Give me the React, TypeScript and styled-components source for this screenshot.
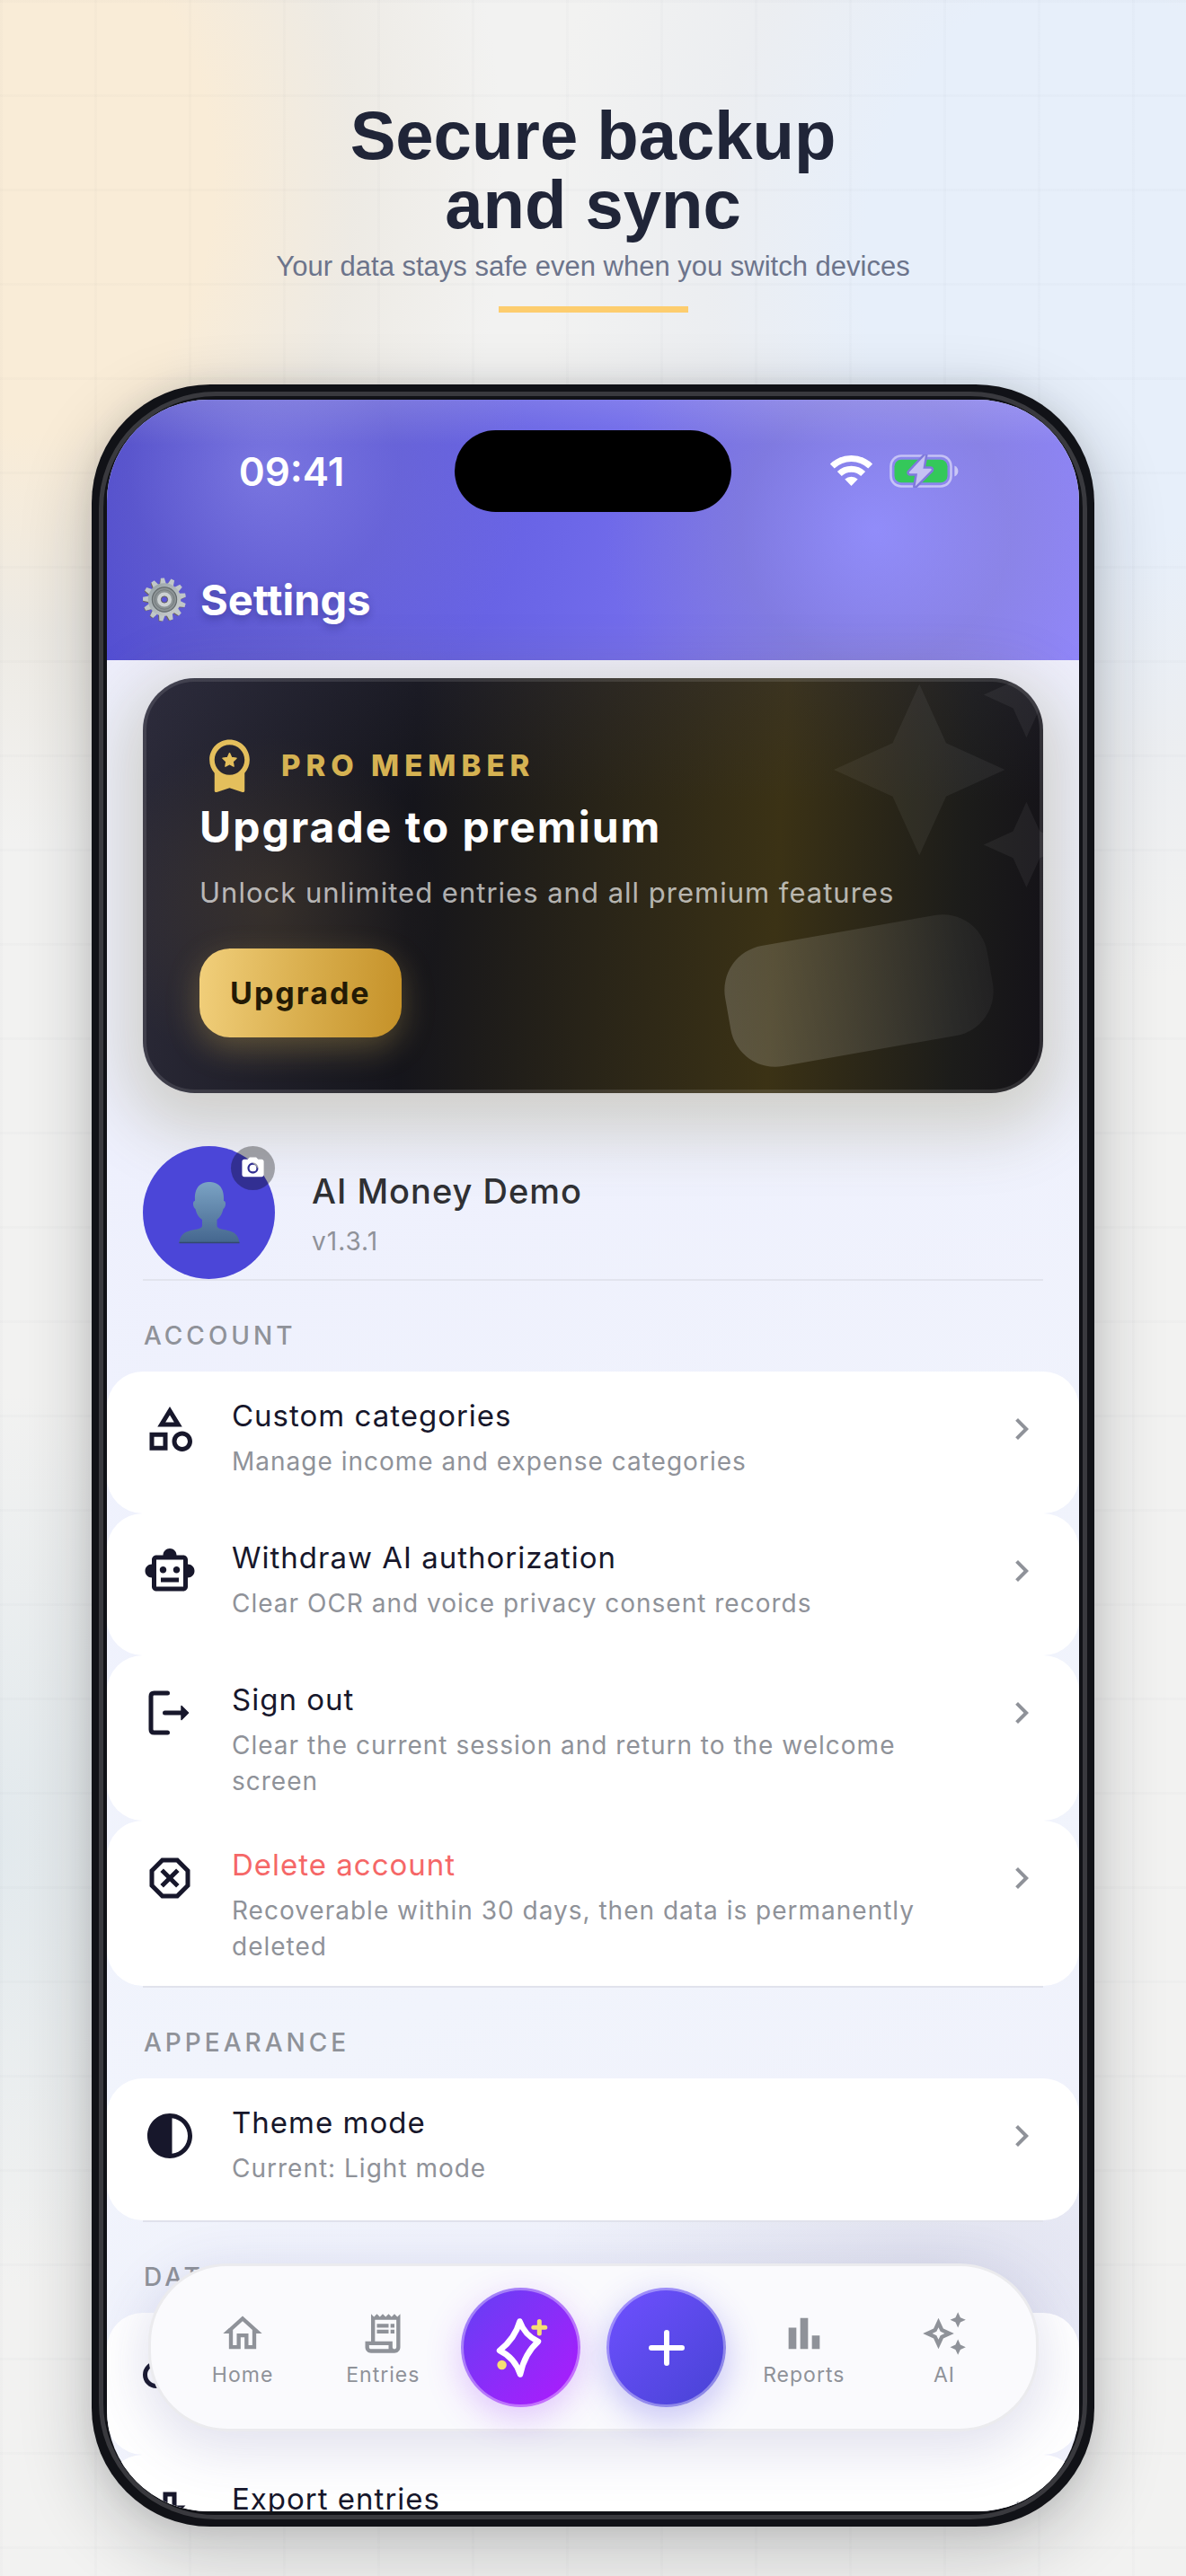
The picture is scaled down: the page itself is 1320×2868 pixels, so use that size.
import React from 'react';
import styled, { createGlobalStyle, css } from 'styled-components';
import {
  MdCameraAlt,
  MdChevronRight,
  MdContrast,
  MdOutlineAutoAwesome,
  MdOutlineBarChart,
  MdOutlineCategory,
  MdOutlineCloudUpload,
  MdOutlineDangerous,
  MdOutlineHome,
  MdOutlineReceiptLong,
  MdOutlineSmartToy,
} from 'react-icons/md';

const GlobalStyle = createGlobalStyle`
  *, *::before, *::after { box-sizing: border-box; }
  body { margin: 0; }
  h1, h2, p, ul { margin: 0; padding: 0; }
  ul { list-style: none; }
  button { font: inherit; border: 0; padding: 0; cursor: pointer; }
  a { color: inherit; text-decoration: none; }
`;

const ink = '#17172b';
const muted = '#8f9299';
const gold = '#e4bf5c';

const Page = styled.main`
  display: flex;
  flex-direction: column;
  align-items: center;
  height: 100vh;
  padding: 112px 102px 55px;
  font-family: Inter, 'Noto Sans', sans-serif;
  background:
    repeating-linear-gradient(90deg, rgba(20, 30, 50, 0.016) 0 3px, transparent 3px 105px),
    repeating-linear-gradient(180deg, rgba(20, 30, 50, 0.014) 0 3px, transparent 3px 105px),
    radial-gradient(ellipse 520px 740px at 40px 200px, #f9ecd7 38%, rgba(236, 232, 224, 0.75) 68%, rgba(243, 243, 242, 0) 100%),
    radial-gradient(ellipse 600px 800px at 1200px 300px, #e7effa 40%, rgba(233, 236, 241, 0.7) 68%, rgba(243, 243, 243, 0) 100%),
    radial-gradient(ellipse 260px 500px at 0 2050px, rgba(222, 231, 236, 0.8), rgba(243, 243, 242, 0)),
    #f2f2f1;
`;

const Hero = styled.header`
  display: flex;
  flex-direction: column;
  align-items: center;
  margin-bottom: 80px;
  font-family: 'Liberation Sans', Arial, sans-serif;
  text-align: center;

  &::after {
    content: '';
    width: 211px;
    height: 7px;
    margin-top: 24px;
    background: #fdcd6e;
  }
`;

const HeroTitle = styled.h1`
  font-size: 76px;
  line-height: 77px;
  color: #202538;
`;

const HeroText = styled.p`
  margin-top: 11px;
  font-size: 31px;
  line-height: 40px;
  color: #6c748b;
`;

const Phone = styled.section`
  position: relative;
  display: flex;
  flex: 1;
  min-height: 0;
  width: 100%;
  padding: 17px;
  border-radius: 132px;
  background: #111217;
  box-shadow: 0 24px 80px rgba(20, 24, 28, 0.24), 0 0 30px rgba(20, 24, 28, 0.08);

  &::after {
    content: '';
    position: absolute;
    inset: 8px;
    border: 5px solid rgba(255, 255, 255, 0.17);
    border-radius: 130px;
    pointer-events: none;
  }
`;

const Screen = styled.div`
  position: relative;
  display: flex;
  flex-direction: column;
  flex: 1;
  overflow: hidden;
  border-radius: 113px;
  background:
    radial-gradient(ellipse 420px 200px at 84% 88%, rgba(120, 120, 150, 0.13), rgba(120, 120, 150, 0)),
    linear-gradient(160deg, #eef0fd 30%, #f1f4fc 70%, #eeeffb);
`;

const AppHeader = styled.header`
  flex: none;
  padding: 34px 40px 36px;
  color: #fff;
  background:
    linear-gradient(180deg, rgba(255, 255, 255, 0.14), rgba(255, 255, 255, 0) 50px),
    radial-gradient(circle 300px at 16% 26%, rgba(255, 255, 255, 0.2), rgba(160, 160, 170, 0.12) 50%, rgba(160, 160, 170, 0)),
    radial-gradient(circle 300px at 79% 50%, rgba(160, 160, 255, 0.5), rgba(140, 140, 190, 0.3) 50%, rgba(140, 140, 190, 0)),
    linear-gradient(105deg, #4e49d0, #6c67e8 48%, #7870ee 62%, #9186fd);
`;

const StatusBar = styled.div`
  display: grid;
  grid-template-columns: 1fr 308px 1fr;
  align-items: center;
  height: 91px;
`;

const Island = styled.div`
  height: 91px;
  border-radius: 46px;
  background: #000;
`;

const Clock = styled.time`
  padding-right: 16px;
  font-size: 44px;
  font-weight: 600;
  line-height: 56px;
  text-align: center;
`;

const StatusIcons = styled.div`
  display: flex;
  align-items: center;
  justify-content: center;
  gap: 19px;
  padding-left: 16px;
`;

const HeaderTitle = styled.h2`
  display: flex;
  align-items: center;
  gap: 16px;
  height: 64px;
  margin-top: 65px;
  font-size: 47px;
  font-weight: 700;
  text-shadow: 0 4px 8px rgba(20, 20, 80, 0.3);
`;

const PromoShade = styled.div`
  flex: none;
  background: linear-gradient(180deg, rgba(238, 238, 252, 0.9), rgba(238, 238, 252, 0) 50px);
`;

const PromoCard = styled.section`
  position: relative;
  overflow: hidden;
  margin: 20px 40px 0;
  padding: 63px 63px 62px;
  border-radius: 58px;
  box-shadow: 0 22px 70px 22px rgba(104, 94, 34, 0.22);
  background:
    radial-gradient(circle 190px at 14% 55%, rgba(120, 96, 50, 0.26), rgba(120, 96, 50, 0)),
    linear-gradient(180deg, rgba(60, 60, 90, 0.16), rgba(60, 60, 90, 0) 30%),
    linear-gradient(93deg, #2a2937, #15151b 30%, #3b3215 70%, #1c1c1a 90%, #141218);

  &::after {
    content: '';
    position: absolute;
    inset: 0;
    border: 4px solid rgba(255, 255, 255, 0.11);
    border-radius: 58px;
    pointer-events: none;
  }
`;

const Stars = styled.svg`
  position: absolute;
  top: -41px;
  right: -41px;
  width: 286px;
  height: 286px;
  fill: rgba(255, 255, 255, 0.055);
`;

const Ghost = styled.div`
  position: absolute;
  right: 57px;
  bottom: 46px;
  width: 296px;
  height: 136px;
  border-radius: 50px;
  background: linear-gradient(90deg, rgba(255, 255, 255, 0.18), rgba(255, 255, 255, 0.04));
  transform: rotate(-10deg);
`;

const PromoBody = styled.div`
  position: relative;
  display: flex;
  flex-direction: column;
  align-items: flex-start;
`;

const Tier = styled.p`
  display: flex;
  align-items: center;
  gap: 24px;
  height: 67px;
  font-size: 33px;
  font-weight: 800;
  letter-spacing: 6px;
  color: #d5b252;
`;

const PromoTitle = styled.h2`
  margin-top: 8px;
  font-size: 48px;
  font-weight: 700;
  line-height: 56px;
  letter-spacing: 2px;
  color: #fff;
`;

const PromoText = styled.p`
  margin-top: 23px;
  font-size: 31px;
  line-height: 44px;
  letter-spacing: 1px;
  color: rgba(255, 255, 255, 0.68);
`;

const UpgradeButton = styled.button`
  height: 99px;
  margin-top: 40px;
  padding: 0 34px;
  border-radius: 34px;
  background: linear-gradient(95deg, #f1cf7b, #d9ae4d 52%, #c59128);
  box-shadow: 0 12px 36px rgba(228, 191, 92, 0.3);
  font-size: 34px;
  font-weight: 700;
  letter-spacing: 2px;
  color: #241a05;
`;

const Profile = styled.section`
  position: relative;
  display: flex;
  flex: none;
  gap: 41px;
  margin: 59px 40px 0;
  border-bottom: 2px solid #e2e4ee;
`;

const Avatar = styled.button`
  position: relative;
  display: grid;
  place-items: center;
  width: 147px;
  height: 148px;
  border-radius: 50%;
  background: #4b46d8;
`;

const CameraBadge = styled.span`
  position: absolute;
  top: 0;
  right: 0;
  display: grid;
  place-items: center;
  width: 49px;
  height: 49px;
  border-radius: 50%;
  background: rgba(0, 0, 0, 0.32);
  color: #fff;
  font-size: 29px;
`;

const ProfileText = styled.div`
  padding-top: 26px;
`;

const ProfileName = styled.h2`
  font-size: 38px;
  font-weight: 500;
  line-height: 48px;
  letter-spacing: 1px;
  color: #2f3033;
`;

const Version = styled.p`
  margin-top: 14px;
  font-size: 28px;
  line-height: 36px;
  letter-spacing: 1px;
  color: ${muted};
`;

const Section = styled.section<{ $ruled?: boolean }>`
  position: relative;
  flex: none;

  ${({ $ruled }) =>
    $ruled &&
    css`
      &::after {
        content: '';
        display: block;
        height: 2px;
        margin: 0 40px;
        background: #e0e2ec;
      }
    `}
`;

const SectionTitle = styled.h2`
  padding: 43px 41px 22px;
  font-size: 28px;
  font-weight: 500;
  line-height: 36px;
  letter-spacing: 4px;
  color: ${muted};
`;

const Row = styled.button`
  display: grid;
  grid-template-columns: 60px 1fr 48px;
  gap: 39px;
  align-items: start;
  width: 100%;
  min-height: 158px;
  padding: 29px 40px 24px;
  border-radius: 40px;
  background: #fff;
  text-align: left;
`;

const RowIcon = styled.span<{ $size: number; $tone: string }>`
  display: grid;
  place-items: center;
  height: 70px;
  font-size: ${({ $size }) => $size}px;
  color: ${({ $tone }) => $tone};
`;

const RowText = styled.span`
  display: flex;
  flex-direction: column;
  gap: 11px;
`;

const RowTitle = styled.span<{ $danger?: boolean }>`
  font-size: 33px;
  line-height: 40px;
  letter-spacing: 1px;
  color: ${({ $danger }) => ($danger ? '#f56767' : ink)};
`;

const RowNote = styled.span`
  font-size: 28px;
  line-height: 40px;
  letter-spacing: 1px;
  color: ${muted};
`;

const TabBar = styled.nav`
  position: absolute;
  left: 46px;
  right: 45px;
  bottom: 89px;
  display: flex;
  align-items: center;
  height: 187px;
  padding: 0 24px;
  border: 3px solid #ebebee;
  border-radius: 88px;
  background: #fafafd;
  box-shadow: 0 16px 60px 6px rgba(70, 70, 150, 0.16);
`;

const Tab = styled.a`
  display: flex;
  flex: 1;
  flex-direction: column;
  align-items: center;
  gap: 4px;
  padding-top: 4px;
  color: ${muted};
  font-size: 23px;
  line-height: 32px;
  letter-spacing: 1px;

  svg {
    font-size: 52px;
  }
`;

const Actions = styled.div`
  display: flex;
  flex: 2;
  justify-content: center;
  gap: 29px;
`;

const ActionButton = styled.button<{ $from: string; $to: string; $glow: string }>`
  display: grid;
  place-items: center;
  width: 133px;
  height: 133px;
  border: 3px solid rgba(255, 255, 255, 0.36);
  border-radius: 50%;
  background: linear-gradient(135deg, ${({ $from }) => $from} 10%, ${({ $to }) => $to} 90%) border-box;
  box-shadow: 0 12px 38px ${({ $glow }) => $glow};
`;

function GearEmoji() {
  const teeth = Array.from({ length: 13 }, (_, i) => (i * 360) / 13);
  return (
    <svg width="48" height="49" viewBox="0 0 48 49" aria-hidden="true">
      <defs>
        <linearGradient id="steel" x1="0" y1="0" x2="1" y2="1">
          <stop offset="0" stopColor="#98a3a7" />
          <stop offset="1" stopColor="#c9cdcd" />
        </linearGradient>
      </defs>
      <g fill="#6f665c" transform="translate(-1 1)">
        {teeth.map((a) => (
          <path key={a} d="M20.600 8 L22.200 1 H25.800 L27.400 8 Z" transform={`rotate(${a - 5} 24 24.500)`} />
        ))}
      </g>
      <g fill="#c0c7c9">
        {teeth.map((a) => (
          <path key={a} d="M20.400 8.500 L22 0.500 H26 L27.600 8.500 Z" transform={`rotate(${a - 5} 24 24.500)`} />
        ))}
      </g>
      <circle cx="24" cy="24.500" r="16" fill="none" stroke="url(#steel)" strokeWidth="4.500" />
      <circle cx="24" cy="24.500" r="14" fill="#8d9496" />
      <circle cx="24" cy="24.500" r="13.600" fill="none" stroke="#656c6e" strokeWidth="1.200" />
      <circle cx="24" cy="24.500" r="10.800" fill="none" stroke="#747b7d" strokeWidth="1" />
      <circle cx="24" cy="24.500" r="5.800" fill="#5a55d6" stroke="#ccd1d2" strokeWidth="4.500" />
      <circle cx="24" cy="24.500" r="3.600" fill="none" stroke="#5f5a58" strokeWidth="1" />
    </svg>
  );
}

function WifiGlyph() {
  return (
    <svg width="47" height="35" viewBox="0 0 47 35" fill="none" stroke="#fff" strokeWidth="7" aria-hidden="true">
      <path d="M2.3 12.1 A30.5 30.5 0 0 1 44.7 12.1" />
      <path d="M10.3 20.5 A19 19 0 0 1 36.7 20.5" />
      <path d="M23.5 34 L16.3 26.6 A10.5 10.5 0 0 1 30.7 26.6 Z" fill="#fff" stroke="none" />
    </svg>
  );
}

function BatteryGlyph() {
  const bolt = 'M40 0.5 L22 19.6 Q21.4 21 23 21.3 H31 L28.6 35.5 L46.6 17.4 Q47.2 16 45.6 15.7 H37.4 Z';
  return (
    <svg width="77" height="37" viewBox="0 0 77 37" aria-hidden="true">
      <rect x="1.5" y="1.5" width="67" height="34" rx="11.5" fill="none" stroke="#fff" strokeOpacity="0.5" strokeWidth="2.6" />
      <path d="M72.4 12.5 Q76.4 14.4 76.4 18.5 T72.4 24.5 Z" fill="#fff" fillOpacity="0.55" />
      <rect x="5.5" y="5.8" width="59" height="25.4" rx="7.5" fill="#34c85a" />
      <path d={bolt} fill="none" stroke="#7f79dc" strokeWidth="5" strokeLinejoin="round" />
      <path d={bolt} fill="#c5c1f2" />
    </svg>
  );
}

function RosetteGlyph() {
  return (
    <svg width="67" height="67" viewBox="0 0 24 24" fill={gold} aria-hidden="true">
      <path d="M20 10c0-4.42-3.58-8-8-8s-8 3.58-8 8c0 2.03.76 3.87 2 5.28V22.3c0 .5.4.8.9.6L12 21.2l5.1 1.7c.5.2.9-.1.9-.6v-7.02c1.24-1.41 2-3.25 2-5.28zM12 4c3.31 0 6 2.69 6 6s-2.69 6-6 6-6-2.69-6-6 2.69-6 6-6z" />
      <path
        d="M12 7.4l.8 1.75 1.9.25-1.4 1.3.35 1.9L12 11.7l-1.65.9.35-1.9-1.4-1.3 1.9-.25z"
        stroke={gold}
        strokeWidth="0.5"
        strokeLinejoin="round"
      />
    </svg>
  );
}

function BustEmoji() {
  return (
    <svg width="68" height="78" viewBox="0 0 68 78" aria-hidden="true">
      <defs>
        <linearGradient id="bust" x1="0" y1="0" x2="0" y2="1">
          <stop offset="0" stopColor="#7ba3c4" />
          <stop offset="1" stopColor="#44668e" />
        </linearGradient>
      </defs>
      <g transform="translate(0 5)">
        <path
          d="M34 0 C43 0 51 5 50 21 C53 21 52.5 28 49.5 30 C48 36 46 39 42.5 42 V49 C44 56 66 49 67.5 68 H0.5 C2 49 24 56 26 49 V42 C22 39 20 36 18.5 30 C15.5 28 15 21 18 21 C17 5 25 0 34 0 Z"
          fill="url(#bust)"
        />
        <path d="M0.5 67.5 H67.5" stroke="#32496f" strokeWidth="1.6" />
      </g>
    </svg>
  );
}

function SignOutGlyph() {
  return (
    <svg width="1em" height="1em" viewBox="0 0 24 24" fill="none" stroke="currentColor" strokeWidth="2" strokeLinecap="round" aria-hidden="true">
      <path d="M11 3.2 H5 Q3.6 3.2 3.6 4.6 V19.4 Q3.6 20.8 5 20.8 H11" />
      <path d="M9.8 12 H18" />
      <path d="M17.2 9 L20.2 12 L17.2 15 Z" fill="currentColor" strokeWidth="0.6" strokeLinejoin="round" />
    </svg>
  );
}

function DownloadGlyph() {
  return (
    <svg width="1em" height="1em" viewBox="0 0 24 24" fill="currentColor" aria-hidden="true">
      <path d="M19 9h-4V3H9v6H5l7 7 7-7zm-8 2V5h2v6h1.170L12 13.170 9.830 11H11zm-6 7h14v2H5z" />
    </svg>
  );
}

function SparkGlyph() {
  return (
    <svg width="76" height="76" viewBox="0 0 76 76" fill="none" aria-hidden="true">
      <path
        d="M36.5 8.5 Q42 24 57 31 Q42 44 37 67.5 Q31 49 14 41 Q31 28 36.5 8.5 Z"
        stroke="#fff"
        strokeWidth="6.5"
        strokeLinejoin="round"
      />
      <path d="M58.3 8.5 V22 M51.8 15.3 H64.8" stroke="#f6df73" strokeWidth="5" strokeLinecap="round" />
      <circle cx="16.6" cy="57" r="5.2" fill="#f6df73" />
    </svg>
  );
}

function PlusGlyph() {
  return (
    <svg width="40" height="40" viewBox="0 0 40 40" stroke="#fff" strokeWidth="6" strokeLinecap="round" aria-hidden="true">
      <path d="M20 3 V37 M3 20 H37" />
    </svg>
  );
}

interface RowProps {
  icon: React.ReactNode;
  title?: string;
  note?: string;
  danger?: boolean;
  label?: string;
}

function SettingsRow({ icon, title, note, danger, label }: RowProps) {
  return (
    <li>
      <Row type="button" aria-label={label}>
        <RowIcon $size={60} $tone={ink}>
          {icon}
        </RowIcon>
        <RowText>
          {title && <RowTitle $danger={danger}>{title}</RowTitle>}
          {note && <RowNote>{note}</RowNote>}
        </RowText>
        <RowIcon $size={48} $tone={muted}>
          <MdChevronRight />
        </RowIcon>
      </Row>
    </li>
  );
}

export default function App() {
  return (
    <>
      <GlobalStyle />
      <Page>
        <Hero>
          <HeroTitle>
            Secure backup
            <br />
            and sync
          </HeroTitle>
          <HeroText>Your data stays safe even when you switch devices</HeroText>
        </Hero>

        <Phone>
          <Screen>
            <AppHeader>
              <StatusBar>
                <Clock>09:41</Clock>
                <Island />
                <StatusIcons>
                  <WifiGlyph />
                  <BatteryGlyph />
                </StatusIcons>
              </StatusBar>
              <HeaderTitle>
                <GearEmoji />
                Settings
              </HeaderTitle>
            </AppHeader>

            <PromoShade>
              <PromoCard>
                <Stars viewBox="0 0 24 24" aria-hidden="true">
                  <path d="M19 9l1.25-2.75L23 5l-2.75-1.25L19 1l-1.25 2.75L15 5l2.75 1.25L19 9zm-7.5.5L9 4 6.5 9.5 1 12l5.5 2.5L9 20l2.5-5.5L17 12l-5.5-2.5zM19 15l-1.25 2.75L15 19l2.75 1.25L19 23l1.25-2.75L23 19l-2.75-1.25L19 15z" />
                </Stars>
                <Ghost />
                <PromoBody>
                  <Tier>
                    <RosetteGlyph />
                    PRO MEMBER
                  </Tier>
                  <PromoTitle>Upgrade to premium</PromoTitle>
                  <PromoText>Unlock unlimited entries and all premium features</PromoText>
                  <UpgradeButton type="button">Upgrade</UpgradeButton>
                </PromoBody>
              </PromoCard>
            </PromoShade>

            <Profile>
              <Avatar type="button" aria-label="Change photo">
                <BustEmoji />
                <CameraBadge>
                  <MdCameraAlt />
                </CameraBadge>
              </Avatar>
              <ProfileText>
                <ProfileName>AI Money Demo</ProfileName>
                <Version>v1.3.1</Version>
              </ProfileText>
            </Profile>

            <Section $ruled>
              <SectionTitle>ACCOUNT</SectionTitle>
              <ul>
                <SettingsRow icon={<MdOutlineCategory />} title="Custom categories" note="Manage income and expense categories" />
                <SettingsRow icon={<MdOutlineSmartToy />} title="Withdraw AI authorization" note="Clear OCR and voice privacy consent records" />
                <SettingsRow icon={<SignOutGlyph />} title="Sign out" note="Clear the current session and return to the welcome screen" />
                <SettingsRow icon={<MdOutlineDangerous />} title="Delete account" note="Recoverable within 30 days, then data is permanently deleted" danger />
              </ul>
            </Section>

            <Section $ruled>
              <SectionTitle>APPEARANCE</SectionTitle>
              <ul>
                <SettingsRow icon={<MdContrast />} title="Theme mode" note="Current: Light mode" />
              </ul>
            </Section>

            <Section>
              <SectionTitle>DATA</SectionTitle>
              <ul>
                <SettingsRow icon={<MdOutlineCloudUpload />} label="Backup" />
                <SettingsRow icon={<DownloadGlyph />} title="Export entries" />
              </ul>
            </Section>

            <TabBar>
              <Tab href="#home">
                <MdOutlineHome />
                Home
              </Tab>
              <Tab href="#entries">
                <MdOutlineReceiptLong />
                Entries
              </Tab>
              <Actions>
                <ActionButton type="button" aria-label="Assistant" $from="#6a3df5" $to="#a91dfc" $glow="rgba(150, 50, 250, 0.26)">
                  <SparkGlyph />
                </ActionButton>
                <ActionButton type="button" aria-label="Add entry" $from="#6b4ffc" $to="#4b44d8" $glow="rgba(80, 70, 230, 0.32)">
                  <PlusGlyph />
                </ActionButton>
              </Actions>
              <Tab href="#reports">
                <MdOutlineBarChart />
                Reports
              </Tab>
              <Tab href="#ai">
                <MdOutlineAutoAwesome />
                AI
              </Tab>
            </TabBar>
          </Screen>
        </Phone>
      </Page>
    </>
  );
}
